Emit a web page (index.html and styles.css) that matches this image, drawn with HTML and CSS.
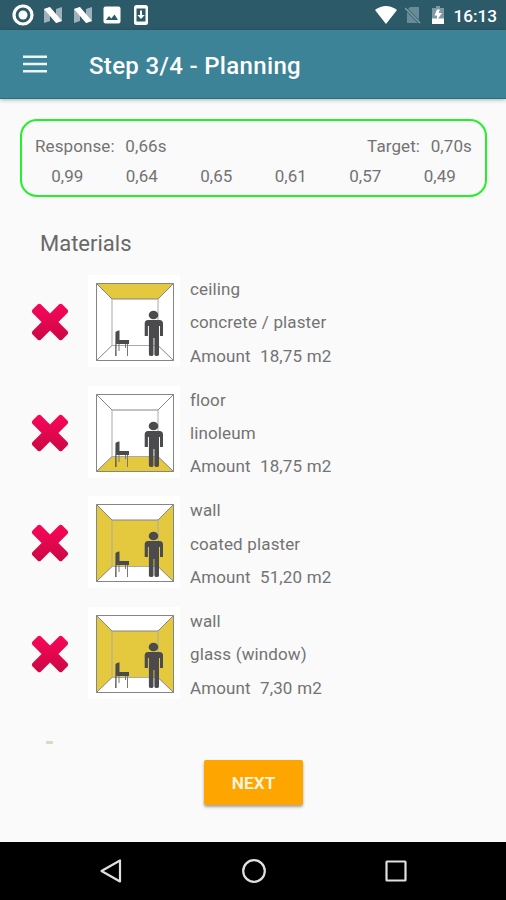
FILE: index.html
```html
<!DOCTYPE html>
<html lang="en">
<head>
<meta charset="utf-8">
<title>Step 3/4 - Planning</title>
<link rel="stylesheet" href="styles.css">
</head>
<body>
<svg class="defs" aria-hidden="true">
  <defs>
    <linearGradient id="red" x1="0" y1="0" x2="0" y2="1"><stop offset="0" stop-color="#fa0559"/><stop offset="1" stop-color="#cb0845"/></linearGradient>
    <symbol id="cross" viewBox="0 0 40 40"><path fill="url(#red)" d="M3.2 8.4 8.4 3.2Q9.8 2.200 11.200 3.200L20 12 28.800 3.200Q30.200 2.200 31.600 3.200L36.800 8.400Q37.800 9.800 36.800 11.200L28 20 36.800 28.800Q37.800 30.200 36.800 31.600L31.600 36.800Q30.200 37.800 28.800 36.800L20 28 11.200 36.800Q9.800 37.800 8.400 36.800L3.200 31.600Q2.200 30.200 3.200 28.800L12 20 3.200 11.200Q2.200 9.800 3.200 8.400Z"/></symbol>
    <symbol id="lines" viewBox="0 0 92 92"><g fill="none" stroke="#858585"><path d="M8.500 8.500h77v77h-77zM8.500 8.500 24 24M85.500 8.500 70 24M8.500 85.500 24 70.500M85.500 85.500 70 70.500M24 24H70"/><path stroke="#aaa" d="M24 24V70.500H70V24"/></g></symbol>
    <symbol id="people" viewBox="0 0 92 92">
      <g fill="#4b4b4d"><ellipse cx="65.500" cy="40" rx="4.800" ry="4.300"/><path d="M60 45h11.500q3.500 0 3.500 3.500V61h-3V51h-1v28.500q0 1.500-2.300 1.500t-2.300-1.500V63h-.9v16.500q0 1.500-2.300 1.500t-2.300-1.500V51h-1v10h-3.200V48.500Q56.700 45 60 45z"/>
      <path d="M27.500 57q2-2 4-1.500V65H41v4H28.500v12h-1.300z"/></g>
      <path fill="none" stroke="#777" d="M31 69v7M39.500 69v12M37.500 69v4"/>
    </symbol>
  </defs>
</svg>

<header class="status">
  <div class="notifications">
    <svg class="s-target" viewBox="0 0 22 22"><circle cx="11" cy="11" r="9" fill="none" stroke="#fff" stroke-width="3.200"/><circle cx="11" cy="11" r="4.500" fill="#fff"/></svg>
    <svg class="s-n" viewBox="0 0 20 18"><path fill="#9fb2bb" d="M1 3 7 1v14l-6 2zM13 3l6-2v14l-6 2z"/><path fill="#fff" d="M1 3 7 1l12 14-6 2z"/></svg>
    <svg class="s-n" viewBox="0 0 20 18"><path fill="#9fb2bb" d="M1 3 7 1v14l-6 2zM13 3l6-2v14l-6 2z"/><path fill="#fff" d="M1 3 7 1l12 14-6 2z"/></svg>
    <svg class="s-photo" viewBox="0 0 18 18"><rect x=".5" y=".5" width="17" height="17" rx="2" fill="#fff"/><path fill="#2d5a69" d="m3 14 3-4 2.300 2.500L11.500 8.500 15 14z"/></svg>
    <svg class="s-phone" viewBox="0 0 14 20"><rect width="14" height="20" rx="2.500" fill="#fff"/><path fill="#2d5a69" d="M2.500 3.500h9v13h-9z"/><path fill="#fff" d="M6 5.500h2V10h2.700L7 14 3.300 10H6z"/></svg>
  </div>
  <div class="system">
    <svg class="s-wifi" viewBox="0 0 22 18"><path fill="#fff" d="M0 4Q11-4 22 4L11 18z"/></svg>
    <svg class="s-sim" viewBox="0 0 16 18"><path fill="#688b97" d="M5 1h9v16H2V4z"/><path stroke="#2d5a69" stroke-width="3" d="m0 2 15 15"/><path stroke="#84a0a9" stroke-width="1.500" d="m0 2 15 15"/></svg>
    <svg class="s-battery" viewBox="0 0 12 18"><path fill="#7e99a3" d="M4 0h4v2h4v16H0V2h4z"/><path fill="#fff" d="M0 12.500h12V18H0zM5 3.500h3L6.500 7H10l-5 7V9.500H2.500z"/></svg>
    <span class="clock">16:13</span>
  </div>
</header>

<div class="appbar">
  <svg class="menu" viewBox="0 0 24 18"><path stroke="#eef5f7" stroke-width="2.400" d="M0 1.800h24M0 9h24M0 16.200h24"/></svg>
  <h1>Step 3/4 - Planning</h1>
</div>

<main>
  <section class="summary">
    <div class="totals"><span>Response:&nbsp; 0,66s</span><span>Target:&nbsp; 0,70s</span></div>
    <div class="bands"><span>0,99</span><span>0,64</span><span>0,65</span><span>0,61</span><span>0,57</span><span>0,49</span></div>
  </section>
  <h2>Materials</h2>
  <ul class="materials">
    <li>
      <svg class="cross"><use href="#cross"/></svg>
      <svg class="room" viewBox="0 0 92 92"><path fill="#e4c83e" d="M8.500 8.500h77L70 24H24z"/><use href="#lines"/><use href="#people"/></svg>
      <div class="info"><span>ceiling</span><span>concrete / plaster</span><span>Amount&nbsp; 18,75 m2</span></div>
    </li>
    <li>
      <svg class="cross"><use href="#cross"/></svg>
      <svg class="room" viewBox="0 0 92 92"><path fill="#e4c83e" d="M8.500 85.500h77L70 70.500H24z"/><use href="#lines"/><use href="#people"/></svg>
      <div class="info"><span>floor</span><span>linoleum</span><span>Amount&nbsp; 18,75 m2</span></div>
    </li>
    <li>
      <svg class="cross"><use href="#cross"/></svg>
      <svg class="room" viewBox="0 0 92 92"><path fill="#e4c83e" d="M8.500 8.500 24 24H70L85.500 8.500v77L70 70.500H24L8.500 85.500z"/><use href="#lines"/><use href="#people"/></svg>
      <div class="info"><span>wall</span><span>coated plaster</span><span>Amount&nbsp; 51,20 m2</span></div>
    </li>
    <li>
      <svg class="cross"><use href="#cross"/></svg>
      <svg class="room" viewBox="0 0 92 92"><path fill="#e4c83e" d="M8.500 8.500 24 24H70L85.500 8.500v77L70 70.500H24L8.500 85.500z"/><use href="#lines"/><use href="#people"/></svg>
      <div class="info"><span>wall</span><span>glass (window)</span><span>Amount&nbsp; 7,30 m2</span></div>
    </li>
  </ul>
  <div class="peek"></div>
  <button class="next">NEXT</button>
</main>

<nav class="navbar">
  <svg viewBox="0 0 24 24"><path d="M21 1.500v21L2.500 12z"/></svg>
  <svg viewBox="0 0 24 24"><circle cx="12" cy="12" r="10.800"/></svg>
  <svg viewBox="0 0 24 24"><rect x="2.500" y="2.500" width="19" height="19" rx=".5"/></svg>
</nav>
</body>
</html>
```
FILE: styles.css
```css
* { box-sizing: border-box; }
body {
  margin: 0;
  width: 506px;
  height: 900px;
  display: flex;
  flex-direction: column;
  overflow: hidden;
  background: #fafafa;
  color: #737373;
  font-family: Roboto, sans-serif;
}
svg { display: block; flex: none; }
.defs { position: absolute; width: 0; height: 0; }

.status {
  height: 30px;
  flex: none;
  display: flex;
  align-items: center;
  justify-content: space-between;
  padding: 0 9px 0 12px;
  background: #2d5a69;
}
.notifications, .system { display: flex; align-items: center; }
.s-target { width: 22px; height: 22px; margin-right: 9px; }
.s-n { width: 20px; height: 18px; margin-right: 9.500px; }
.s-photo { width: 18px; height: 18px; margin-left: 1px; margin-right: 13px; }
.s-phone { width: 14px; height: 20px; }
.s-wifi { width: 22px; height: 18px; margin-right: 8px; }
.s-sim { width: 16px; height: 18px; margin-right: 11px; }
.s-battery { width: 12px; height: 18px; margin-right: 9px; }
.clock { color: #fff; font-size: 17.200px; font-weight: 500; line-height: 30px; padding-top: 2px; }

.appbar {
  height: 69px;
  flex: none;
  display: flex;
  align-items: center;
  padding: 4px 0 0 23px;
  background: #3d8398;
  border-bottom: 1px solid #1f7289;
  box-shadow: 0 1px 4px rgba(0, 0, 0, .3);
}
.menu { width: 24px; height: 18px; margin: 0 42px 4px 0; }
h1 { margin: 0; color: #fff; font-size: 24px; font-weight: 500; line-height: 32px; letter-spacing: .33px; }

main { flex: 1; display: flex; flex-direction: column; padding-top: 20px; }
.summary {
  height: 78px;
  margin: 0 19px 0 20px;
  padding: 11px 13px 0;
  border: 2px solid #22f02a;
  border-radius: 17px;
  font-size: 17px;
  line-height: 29.500px;
}
.totals { display: flex; justify-content: space-between; word-spacing: 1px; letter-spacing: .1px; }
.bands { display: grid; grid-template-columns: repeat(6, 74.500px); margin-left: -5px; text-align: center; }
h2 { margin: 32px 0 0 40px; font-size: 22px; font-weight: 400; line-height: 30px; color: #686868; }
.materials { list-style: none; margin: 16px 0 0; padding: 0; }
.materials li { display: flex; align-items: flex-start; height: 110.600px; padding-left: 28.500px; }
.cross { width: 42px; height: 42px; margin: 26px 17px 0 0; }
.room { width: 92px; height: 92px; background: #fff; }
.info { display: flex; flex-direction: column; margin: -2px 0 0 10.500px; font-size: 17px; line-height: 33.400px; letter-spacing: .12px; word-spacing: .3px; }
.peek { width: 7px; height: 3px; flex: none; margin: 24px 0 0 46px; background: #dcd9c8; }
.next {
  width: 99px;
  height: 45px;
  flex: none;
  margin: 16px 0 0 204px;
  padding: 0;
  border: 0;
  border-radius: 2px;
  background: #ffa500;
  box-shadow: 0 2px 3px rgba(0, 0, 0, .35);
  color: #fff6e0;
  font: 600 17.300px Roboto, sans-serif;
}
.navbar {
  height: 58px;
  flex: none;
  display: flex;
  align-items: center;
  justify-content: space-between;
  padding: 0 98px 0 99px;
  background: #000;
}
.navbar svg { width: 24px; height: 24px; fill: none; stroke: #e0e0e0; stroke-width: 2.200; stroke-linejoin: round; }
```
